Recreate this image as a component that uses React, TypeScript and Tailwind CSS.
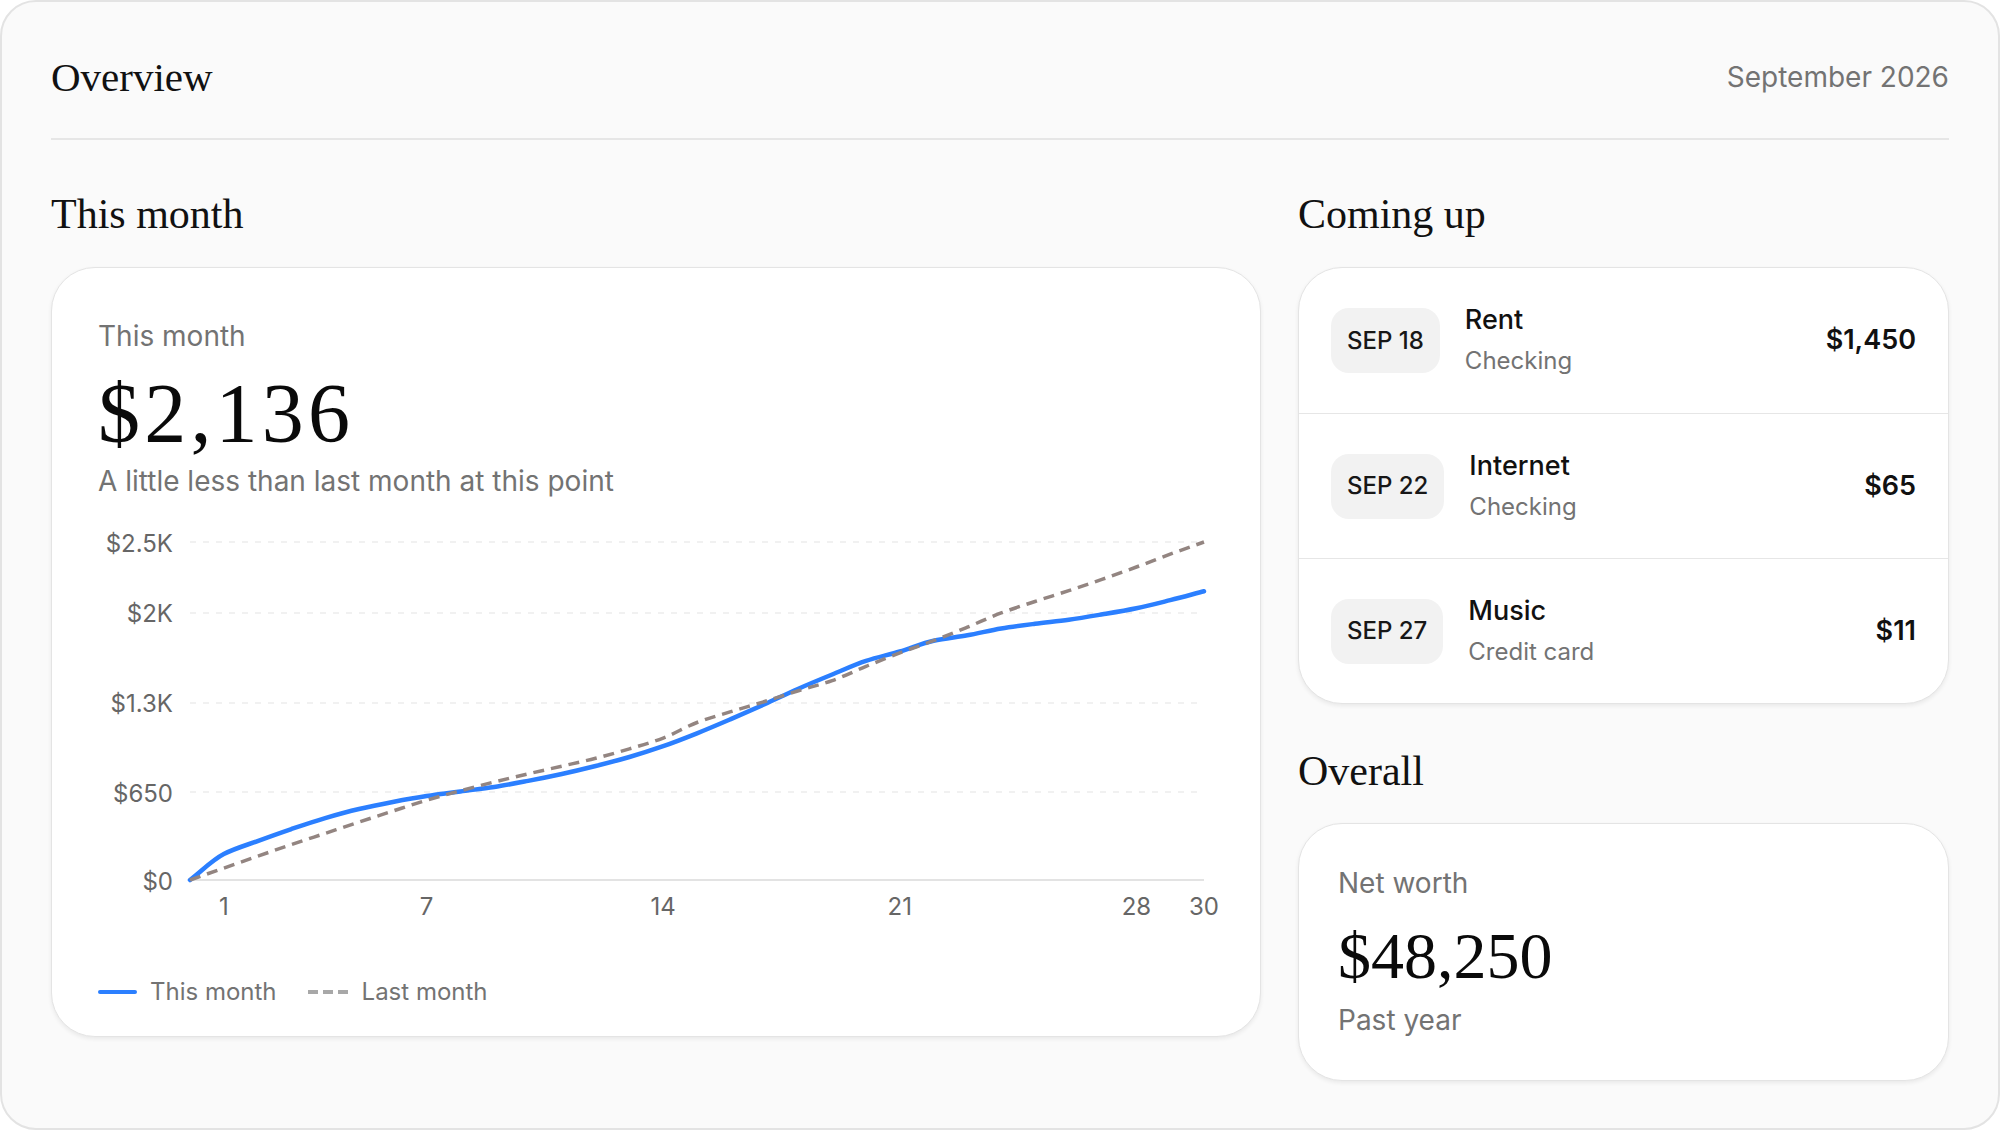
import React from "react";

type Point = [number, number];

const upcoming = [
  { date: "SEP 18", name: "Rent", account: "Checking", amount: "$1,450" },
  { date: "SEP 22", name: "Internet", account: "Checking", amount: "$65" },
  { date: "SEP 27", name: "Music", account: "Credit card", amount: "$11" },
];

// running spend per day of the month
const thisMonth = [
  0, 192, 288, 377, 458, 525, 577, 621, 655, 688, 733, 784, 843, 910, 990, 1085,
  1190, 1300, 1415, 1520, 1620, 1690, 1770, 1810, 1860, 1895, 1925, 1965, 2010,
  2070, 2136,
];
const lastMonth = [
  0, 88, 176, 262, 345, 428, 510, 590, 660, 725, 785, 842, 900, 970, 1050, 1165,
  1245, 1320, 1400, 1475, 1580, 1680, 1770, 1870, 1975, 2060, 2140, 2225, 2315,
  2410, 2500,
];

const W = 1115;
const H = 410;
const X0 = 92;
const X1 = 1106;
const Y0 = 359;
const YTOP = 21;
const MAX = 2500;

const xAt = (d: number) => X0 + (d / 30) * (X1 - X0);
const yAt = (v: number) => Y0 - (v / MAX) * (Y0 - YTOP);

const yTicks = [
  { v: 2500, label: "$2.5K" },
  { v: 1975, label: "$2K" },
  { v: 1310, label: "$1.3K" },
  { v: 650, label: "$650" },
];
const xTicks = [1, 7, 14, 21, 28, 30];

// monotone cubic curve through the points, same idea as d3's curveMonotoneX
function monotonePath(pts: Point[]) {
  const n = pts.length;
  const slopes: number[] = [];
  for (let i = 0; i < n - 1; i++) {
    slopes.push((pts[i + 1][1] - pts[i][1]) / (pts[i + 1][0] - pts[i][0]));
  }
  const tangents: number[] = [slopes[0]];
  for (let i = 1; i < n - 1; i++) {
    const s0 = slopes[i - 1];
    const s1 = slopes[i];
    if (s0 * s1 <= 0) {
      tangents.push(0);
    } else {
      const h0 = pts[i][0] - pts[i - 1][0];
      const h1 = pts[i + 1][0] - pts[i][0];
      tangents.push((3 * (h0 + h1)) / ((2 * h1 + h0) / s0 + (h1 + 2 * h0) / s1));
    }
  }
  tangents.push(slopes[n - 2]);

  let d = `M${pts[0][0]},${pts[0][1]}`;
  for (let i = 0; i < n - 1; i++) {
    const [xa, ya] = pts[i];
    const [xb, yb] = pts[i + 1];
    const h = (xb - xa) / 3;
    d += ` C${xa + h},${ya + tangents[i] * h} ${xb - h},${yb - tangents[i + 1] * h} ${xb},${yb}`;
  }
  return d;
}

function SpendChart() {
  const current = monotonePath(thisMonth.map((v, i) => [xAt(i), yAt(v)]));
  const previous = monotonePath(lastMonth.map((v, i) => [xAt(i), yAt(v)]));

  return (
    <svg width={W} height={H} viewBox={`0 0 ${W} ${H}`} className="block overflow-visible">
      {yTicks.map((t) => (
        <line
          key={t.label}
          x1={X0}
          x2={X1}
          y1={yAt(t.v)}
          y2={yAt(t.v)}
          stroke="#ededed"
          strokeWidth={1.5}
          strokeDasharray="6 7"
        />
      ))}
      <line x1={X0} x2={X1} y1={Y0} y2={Y0} stroke="#e3e3e3" strokeWidth={2} />

      {[...yTicks, { v: 0, label: "$0" }].map((t) => (
        <text
          key={t.label}
          x={75}
          y={yAt(t.v) + 1}
          textAnchor="end"
          dominantBaseline="central"
          fontSize={24}
          fill="#666666"
          fontFamily="Inter, sans-serif"
        >
          {t.label}
        </text>
      ))}
      {xTicks.map((d) => (
        <text
          key={d}
          x={xAt(d)}
          y={385}
          textAnchor="middle"
          dominantBaseline="central"
          fontSize={24}
          fill="#666666"
          fontFamily="Inter, sans-serif"
        >
          {d}
        </text>
      ))}

      <path d={current} fill="none" stroke="#2b7fff" strokeWidth={4.5} strokeLinecap="round" />
      <path d={previous} fill="none" stroke="#938581" strokeWidth={3.5} strokeDasharray="11 7" />
    </svg>
  );
}

function SectionTitle({ children }: { children: React.ReactNode }) {
  return (
    <h2 className="font-['Liberation_Serif',serif] text-[42px] leading-[50px] text-[#111111] font-normal">
      {children}
    </h2>
  );
}

export default function App() {
  return (
    <div className="w-full h-[1130px] bg-[#fafafa] border-2 border-[#e3e3e3] rounded-[36px] px-[49px] pt-[50px] font-['Inter',sans-serif] overflow-hidden">
      <header className="flex items-center justify-between pb-[36px] border-b-2 border-[#e6e6e6]">
        <h1 className="font-['Liberation_Serif',serif] text-[41px] leading-[50px] text-[#111111] font-normal">
          Overview
        </h1>
        <span className="text-[28px] leading-[50px] text-[#737373]">September 2026</span>
      </header>

      <main className="grid grid-cols-[1fr_651px] gap-[37px] pt-[49px]">
        <section>
          <SectionTitle>This month</SectionTitle>
          <div className="mt-[28px] bg-white border-[1.5px] border-[#e4e4e4] rounded-[44px] shadow-[0_2px_4px_rgba(0,0,0,0.07)] px-[46px] pt-[49px] pb-[29px]">
            <p className="text-[28px] leading-[38px] text-[#737373]">This month</p>
            <p className="mt-[10px] font-['Liberation_Serif',serif] text-[84px] leading-[98px] tracking-[0.05em] text-[#0a0a0a]">
              $2,136
            </p>
            <p className="text-[28px] leading-[36px] text-[#737373]">
              A little less than last month at this point
            </p>
            <div className="mt-[22px]">
              <SpendChart />
            </div>
            <div className="mt-[46px] flex items-center h-[30px] text-[24px] text-[#737373]">
              <span className="w-[39px] h-[4px] rounded-full bg-[#2b7fff]" />
              <span className="ml-[13px]">This month</span>
              <svg width="41" height="4" className="ml-[31px]">
                <line x1="0" x2="41" y1="2" y2="2" stroke="#a8a8a8" strokeWidth="4" strokeDasharray="10 5" />
              </svg>
              <span className="ml-[13px]">Last month</span>
            </div>
          </div>
        </section>

        <section>
          <SectionTitle>Coming up</SectionTitle>
          <div className="mt-[28px] bg-white border-[1.5px] border-[#e4e4e4] rounded-[44px] shadow-[0_2px_4px_rgba(0,0,0,0.07)] overflow-hidden">
            {upcoming.map((item, i) => (
              <div
                key={item.date}
                className={`flex items-center h-[145px] px-[32px] ${i > 0 ? "border-t-[1.5px] border-[#e6e6e6]" : ""}`}
              >
                <div className="h-[65px] px-[16px] flex items-center rounded-[18px] bg-[#f2f2f2] text-[24px] font-medium text-[#171717]">
                  {item.date}
                </div>
                <div className="ml-[25px] flex-1">
                  <p className="text-[27px] leading-[36px] font-medium text-[#111111]">{item.name}</p>
                  <p className="mt-[5px] text-[24px] leading-[36px] text-[#737373]">{item.account}</p>
                </div>
                <span className="text-[27px] font-semibold text-[#111111]">{item.amount}</span>
              </div>
            ))}
          </div>

          <div className="mt-[42px]">
            <SectionTitle>Overall</SectionTitle>
          </div>
          <div className="mt-[27px] h-[258px] bg-white border-[1.5px] border-[#e4e4e4] rounded-[44px] shadow-[0_2px_4px_rgba(0,0,0,0.07)] px-[39px] pt-[41px]">
            <p className="text-[28px] leading-[36px] text-[#737373]">Net worth</p>
            <p className="mt-[15px] font-['Liberation_Serif',serif] text-[66px] leading-[80px] text-[#0a0a0a]">
              $48,250
            </p>
            <p className="mt-[6px] text-[28px] leading-[36px] text-[#737373]">Past year</p>
          </div>
        </section>
      </main>
    </div>
  );
}
